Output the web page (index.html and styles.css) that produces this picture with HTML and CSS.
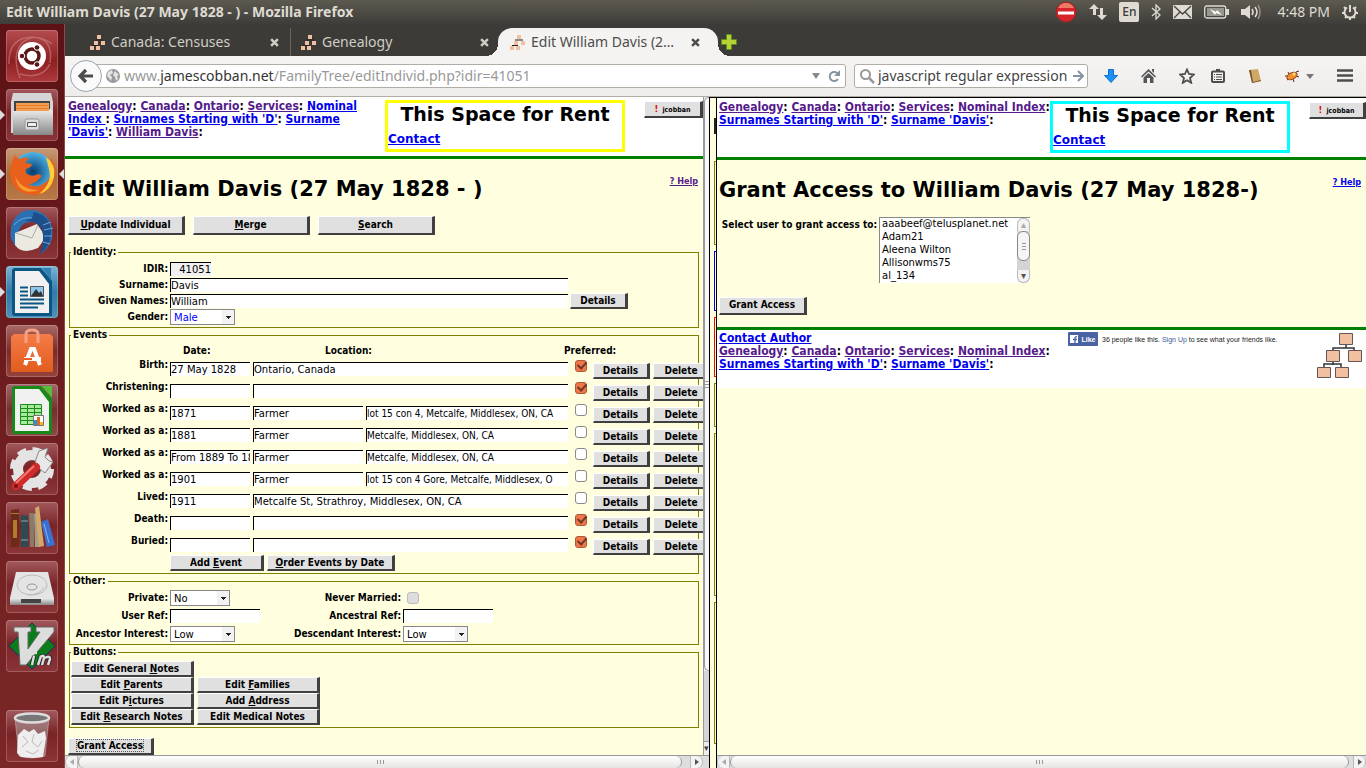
FILE: index.html
```
<!DOCTYPE html>
<html lang="en">
<head>
<meta charset="utf-8">
<title>Edit William Davis (27 May 1828 - )</title>
<link rel="stylesheet" href="styles.css">
</head>
<body>
<svg class="defs" aria-hidden="true">
  <defs>
    <symbol id="favicon" viewBox="0 0 15 15"><path fill="#f0c0a0" d="M7 0h4v4H7zM4 6h4v4H4zM11 6h4v4h-4zM0 11h4v4H0zM6 11h4v4H6z"/><path d="M5 5h8M2 10.500h6" stroke="#222" fill="none"/></symbol>
    <symbol id="cross" viewBox="0 0 8 8"><path d="M1 1l6 6M7 1L1 7" stroke="currentColor" stroke-width="2.200" fill="none"/></symbol>
    <symbol id="pedigree" viewBox="0 0 48 48"><path d="M30 12v4M17 21v-5h21v5M17 29v4M8 37v-5h17v5" fill="none" stroke="#333" stroke-width="1.500"/><g fill="#f0c0a0" stroke="#665550"><path d="M23.500 1.500h13v11h-13zM10.500 18.500h13v11h-13zM32.500 18.500h13v11h-13zM1.500 35.500h13v10h-13zM19.500 35.500h13v10h-13z"/></g></symbol>
    <linearGradient id="steel" x2="0" y2="1"><stop stop-color="#eee"/><stop offset="1" stop-color="#888"/></linearGradient>
    <linearGradient id="orange" x2="0" y2="1"><stop stop-color="#f47c48"/><stop offset="1" stop-color="#e25c1e"/></linearGradient>
    <radialGradient id="globe"><stop stop-color="#053a70"/><stop offset="1" stop-color="#4fb4e4"/></radialGradient>
  </defs>
</svg>

<header class="panel">
  <span class="panel-title">Edit William Davis (27 May 1828 - ) - Mozilla Firefox</span>
  <div class="tray">
    <svg width="22" height="22" viewBox="0 0 22 22"><circle cx="11" cy="11" r="10" fill="#d8232a" stroke="#8e2a25"/><path d="M3 7a9 9 0 0 1 16 0z" fill="#ee7966"/><path fill="#fff" d="M3 10.500h16v3H3z"/></svg>
    <svg width="18" height="18" viewBox="0 0 18 18" fill="#dfdbd2"><path d="M5 1l5 5H7v6H4V6H0zM13 17l-5-5h3V5h3v7h4z"/></svg>
    <span class="lang">En</span>
    <svg width="10" height="16" viewBox="0 0 10 16" fill="none" stroke="#dfdbd2" stroke-width="1.300"><path d="M1 4l8 7-4 4V1l4 4-8 7"/></svg>
    <svg width="19" height="14" viewBox="0 0 19 14"><path fill="#dfdbd2" d="M0 0h19v14H0z"/><path d="M1 1l8.500 8L18 1M1 13l6-6M18 13l-6-6" fill="none" stroke="#444" stroke-width="1.300"/></svg>
    <svg width="25" height="14" viewBox="0 0 25 14"><rect x=".7" y="1" width="21" height="12" rx="2" fill="none" stroke="#dfdbd2" stroke-width="1.300"/><path fill="#dfdbd2" d="M22 4h3v6h-3z"/><path fill="#99968f" d="M3 3h17v8H3z"/><path fill="#fff" d="M6 4l6 3 1-2 5 5-6-2-1 2z"/></svg>
    <svg width="20" height="16" viewBox="0 0 20 16"><path fill="#dfdbd2" d="M0 5h4l5-4v14l-5-4H0z"/><path fill="none" stroke="#dfdbd2" stroke-width="1.600" d="M11 5q2 3 0 6M14 3q4 5 0 10"/><path fill="none" stroke="#918d86" stroke-width="1.600" d="M17 1q4 7 0 14"/></svg>
    <time class="clock">4:48 PM</time>
    <svg width="16" height="16" viewBox="0 0 16 16" fill="none" stroke="#dfdbd2"><path stroke-width="2" d="M5 3.500a5.500 5.500 0 1 0 6 0M8 1v7"/><path stroke-width="2" d="M0 9h3M13 9h3M8 13v3M2 3l2 2M14 3l-2 2M3 14l2-2M13 14l-2-2"/></svg>
  </div>
</header>

<div class="desktop">
<nav class="launcher" aria-label="Launcher">
  <button class="tile t-dash" aria-label="Dash"><svg viewBox="0 0 52 52"><path d="M3 34Q2 8 26 7q22 1 18 26M46 14Q30 2 17 12 5 24 14 48M14 44q22 6 30-10" fill="none" stroke="#d69090" stroke-opacity=".5" stroke-width="1.500"/><circle cx="26" cy="26" r="14" fill="#fff"/><circle cx="26" cy="26" r="7" fill="none" stroke="#5a1717" stroke-width="3.500"/><g fill="#5a1717" stroke="#fff"><circle cx="16" cy="26" r="2.800"/><circle cx="31" cy="17.500" r="2.800"/><circle cx="31" cy="34.500" r="2.800"/></g></svg></button>
  <button class="tile t-files running" aria-label="Files"><svg viewBox="0 0 52 52"><path fill="#d5d5d5" d="M7 4h38l2 9v31H5V13z"/><path fill="#444" d="M8 12h36v10H8z"/><path fill="#f0a050" d="M10 14h33v8H10z"/><path fill="#e87a2c" d="M10 16h32v1H10zM10 19h32v1H10z"/><path fill="url(#steel)" d="M7 22l36 0 0-2 4 2v24H7z"/><rect x="19" y="30" width="14" height="11" rx="2" fill="#ddd" stroke="#999"/><path d="M21.500 33.500h9v4h-9z" fill="#eee" stroke="#555"/></svg></button>
  <button class="tile t-fox running focused" aria-label="Firefox"><svg viewBox="0 0 52 52"><circle cx="27" cy="24" r="20" fill="url(#globe)"/><path fill="#e8601c" d="M4 25C4 15 8 11 9 7q2 4 5 4 5-3 9 0-3 1-4 4l7 1q0 3-6 5-2 4 3 6 5 2 9-1 5 1 2 4-5 6-12 6 10 6 19-3 8-9 3-24 6 6 5 18-3 20-22 20Q6 46 4 25z"/><path fill="#ffcf3a" d="M40 9q10 7 8 20-3 14-15 17 14-11 10-25z"/><path fill="#f89c2f" d="M9 28q6 14 24 14-20 7-24-14z"/></svg></button>
  <button class="tile t-bird" aria-label="Thunderbird"><svg viewBox="0 0 52 52"><path fill="#2c70b4" d="M5 32Q2 12 18 4q16-4 25 9 10 20-8 34 3-7 2-14Q39 13 24 15 11 15 10 40z"/><path fill="#eceae0" d="M9 26l22-9 9 13-8 11q-16 7-23-3z"/><path d="M10 26l16 5 6-13" fill="none" stroke="#aaa"/><path fill="#1e4f8b" d="M27 5q18 3 18 21-1 14-11 21 3-8 3-15 1-18-18-18 10-3 8-9z"/><path d="M37 18l8-3M38 23l9-2M38 29l8 0M37 35l7 2M8 18q8-9 18-7" stroke="#69a7dd" fill="none"/></svg></button>
  <button class="tile t-writer running" aria-label="Writer"><svg viewBox="0 0 52 52"><path fill="#0d5583" d="M9 2h26l11 13v35H9q-3 0-3-3V5q0-3 3-3z"/><path fill="#2f82b2" d="M36 2h9v12z"/><path fill="#f1f1f1" d="M9 5h24l10 13v29H9z"/><path d="M14 21.500h8M14 25.500h8M14 29.500h8M14 33.500h24M14 37.500h24M14 41.500h18" stroke="#0d5583" stroke-width="2"/><path fill="#8bc8ee" stroke="#555" d="M24.500 20.500h13v10h-13z"/><path fill="#333" d="M25 30l5-7 3 4 2-2 2 5z"/></svg></button>
  <button class="tile t-soft" aria-label="Software Center"><svg viewBox="0 0 52 52"><path fill="url(#orange)" d="M5 12l3-3h36l3 3v35H5z"/><path d="M20 18V9q0-4 6-4t6 4v9" fill="none" stroke="#f5a184" stroke-width="3"/><path d="M19 40l6-16h3l6 16" fill="none" stroke="#fff" stroke-width="4"/><path d="M18 34h17" stroke="#fff" stroke-width="4"/><path d="M18 34h8" stroke="#e95d20" stroke-width="2"/></svg></button>
  <button class="tile t-calc" aria-label="Calc"><svg viewBox="0 0 52 52"><path fill="#188a18" d="M9 2h26l11 13v35H9q-3 0-3-3V5q0-3 3-3z"/><path fill="#55bd38" d="M36 2h10v12z"/><path fill="#f1f1f1" d="M9 5h24l10 13v29H9z"/><path fill="#a8e89a" stroke="#188a18" d="M14.500 20.500h21v20h-21z"/><path stroke="#188a18" d="M14 24.500h22M14 28.500h22M14 32.500h22M14 36.500h22M21.500 20v21M28.500 20v21"/><path fill="#fff" stroke="#777" d="M27.500 31.500h10v10h-10z"/><path fill="#2a8fd8" d="M28 36h3v5h-3z"/><path fill="#e5671f" d="M31 33h3v8h-3z"/><path fill="#f5b921" d="M34 38h3v3h-3z"/></svg></button>
  <button class="tile" aria-label="Settings"><svg viewBox="0 0 52 52"><circle cx="26" cy="26" r="14" fill="none" stroke="#e4e4e4" stroke-width="10"/><circle cx="26" cy="26" r="19.500" fill="none" stroke="#e4e4e4" stroke-width="5" stroke-dasharray="9 6.300"/><path d="M29 22l10 8 8-11-4-1-4-4 3-9-9 3-3 8z" fill="#e8e8e8" stroke="#888"/><path d="M10 43L30 24" stroke="#cf2b2b" stroke-width="8" stroke-linecap="round"/><path d="M10 40L28 23" stroke="#f07a70" stroke-width="2"/><circle cx="10" cy="43" r="2" fill="#7c1212"/></svg></button>
  <button class="tile" aria-label="Library"><svg viewBox="0 0 52 52"><path fill="#6b2a1a" d="M5 8l8-1v38H5z"/><path fill="#b27a2e" d="M7 18h4v18H7zM5 11h8v1H5z"/><path fill="#2f4a50" d="M15 13l7 1v31h-7z"/><path stroke="#8aa" d="M15 19h7M15 38h7"/><path fill="#8a7a6a" d="M23 11h5v34h-4z"/><path fill="#aa9b85" d="M28 12l3-1 3 34h-5z"/><path fill="#d0aa68" d="M29 6l4-2 5 40-5 1z"/><path fill="#3a70d0" d="M35 20l7-3 7 26-8 2z"/><path d="M38 22l5 19" stroke="#8ab4f4"/></svg></button>
  <button class="tile" aria-label="Disk"><svg viewBox="0 0 52 52"><path fill="#e4e4e4" d="M10 11h32l6 26H4z"/><path fill="url(#steel)" d="M4 37h44v7H4z"/><path fill="#444" d="M15 38h20v4H15z"/><ellipse cx="26" cy="24" rx="15" ry="10" fill="none" stroke="#bbb"/><ellipse cx="26" cy="26" rx="5" ry="3" fill="none" stroke="#999"/><path d="M22 34q12 0 16-8" fill="none" stroke="#bbb"/></svg></button>
  <button class="tile" aria-label="Vim"><svg viewBox="0 0 52 52"><path fill="#0b7d18" stroke="#0b3070" d="M26 3l23 23-23 23L3 26z"/><path fill="#ddd" stroke="#666" d="M8 7h17v5h-3v17L34 12h-4V7h18v5L20 45h-6l-2-33H8z"/><g fill="none" stroke="#222" stroke-width="4"><path d="M28 36l-2 9M32 45l3-9M34 37q4-3 4 1l-2 7M39 38q5-3 5 1l-2 6"/></g><g fill="none" stroke="#ddd" stroke-width="2.500"><path d="M28 36l-2 9M32 45l3-9M34 37q4-3 4 1l-2 7M39 38q5-3 5 1l-2 6"/></g><path fill="#ddd" d="M28 31h3v3h-3z"/></svg></button>
  <button class="tile trash" aria-label="Trash"><svg viewBox="0 0 52 52"><path fill="#bbb" fill-opacity=".45" stroke="#ddd" stroke-opacity=".4" d="M9 8h34l-4 38q-13 4-26 0z"/><path fill="#eee" d="M12 25l6-6 5 3 5-3 4 5 7-3 1 7-3 19-10 1-12-1-4-4z"/><path d="M17 26l5 6-6 5M28 24l-2 8 6 5 4-6M20 41l7 3 6-4" fill="none" stroke="#bbb"/><ellipse cx="26" cy="8" rx="17" ry="4.500" fill="#777" stroke="#ddd" stroke-width="2.500"/></svg></button>
</nav>

<div class="browser">
  <div class="tabs">
    <div class="tab"><svg class="fav"><use href="#favicon"/></svg><span>Canada: Censuses</span><button class="x" aria-label="Close tab"><svg><use href="#cross"/></svg></button></div>
    <div class="tab sep"><svg class="fav"><use href="#favicon"/></svg><span>Genealogy</span><button class="x" aria-label="Close tab"><svg><use href="#cross"/></svg></button></div>
    <div class="tab active"><svg class="fav"><use href="#favicon"/></svg><span>Edit William Davis (2…</span><button class="x" aria-label="Close tab"><svg><use href="#cross"/></svg></button></div>
    <button class="newtab" aria-label="New tab"><svg width="16" height="16" viewBox="0 0 16 16"><path d="M5.500.5h5v5h5v5h-5v5h-5v-5h-5v-5h5z" fill="#b5d334" stroke="#5f8a1e"/></svg></button>
  </div>
  <div class="toolbar">
    <button class="back" aria-label="Back"><svg width="16" height="16" viewBox="0 0 16 16"><path d="M8 2L2 8l6 6M2 8h13" fill="none" stroke="#4c4c4c" stroke-width="3.200"/></svg></button>
    <div class="urlbar">
      <svg width="14" height="14" viewBox="0 0 14 14"><circle cx="7" cy="7" r="7" fill="#999"/><path fill="#e4e4e4" d="M2 3l4-2 1 3-3 2 2 2-1 4-2-3-2-2zM9 2l4 4-2 1 1 3-2 2-1-4-2-2z"/></svg>
      <span class="url">www.<b>jamescobban.net</b>/FamilyTree/editIndivid.php?idir=41051</span>
      <svg width="8" height="6" viewBox="0 0 8 6"><path fill="#888" d="M0 0h8L4 6z"/></svg>
      <svg width="13" height="13" viewBox="0 0 13 13"><path d="M10 9a4.500 4.500 0 1 1 0-5" fill="none" stroke="#8695a3" stroke-width="2"/><path fill="#8695a3" d="M12 0v6H6z"/></svg>
    </div>
    <div class="search">
      <svg width="15" height="15" viewBox="0 0 15 15" fill="none" stroke="#999" stroke-width="2"><circle cx="5.500" cy="5.500" r="4.500"/><path stroke-width="2.500" d="M9 9l5 5"/></svg>
      <input aria-label="Search" value="javascript regular expression">
      <svg width="11" height="12" viewBox="0 0 11 12"><path d="M0 6h9M5 1l5 5-5 5" fill="none" stroke="#8494a2" stroke-width="2"/></svg>
    </div>
    <div class="tools">
      <svg width="14" height="14" viewBox="0 0 14 14"><path fill="#1d90f5" stroke="#0b6fd0" d="M4.500.5h5v6h4L7 13.500.5 6.500h4z"/></svg>
      <svg width="15" height="14" viewBox="0 0 15 14" fill="#555"><path d="M0 7.500L7.500 0 15 7.500l-1 1L7.500 2.500 1 8.500zM11 0h2v4l-2-2zM2.500 8.500l5-4.500 5 4.500V14H9V9H6v5H2.500z"/></svg>
      <svg width="16" height="16" viewBox="0 0 16 16"><path d="M8 1.500l2 4.500 5 .5-4 3.500 1.200 4.800L8 12.300l-4.200 2.500L5 10 1 6.500 6 6z" fill="none" stroke="#4d4d4d" stroke-width="1.800"/></svg>
      <svg width="14" height="14" viewBox="0 0 14 14" fill="none" stroke="#4d4d4d"><rect x="1" y="2.500" width="12" height="10.500" rx="1" stroke-width="2"/><path stroke-width="2" d="M5 1h4"/><path d="M3 5.500h1M5 5.500h6M3 8h1M5 8h6M3 10.500h1M5 10.500h6"/></svg>
      <svg width="14" height="14" viewBox="0 0 14 14"><path fill="#d0a866" d="M1 1l9-1 3 12-9 2z"/><path fill="#75502e" d="M1 1l2 0 2 12-1 1zM5 13l8-2v1l-9 2z"/></svg>
      <svg width="16" height="13" viewBox="0 0 16 13"><path d="M1 6l3 0M3 10l3-2M9 9l1 3M12 2l3-1M12 6l3 1M5 4L4 2" stroke="#5a2a12"/><ellipse cx="8" cy="6" rx="5.500" ry="3.200" transform="rotate(-28 8 6)" fill="#f0912c" stroke="#8c3d12"/><circle cx="10" cy="4" r="1.500" fill="#ffd580"/></svg>
      <svg width="8" height="5" viewBox="0 0 8 5"><path fill="#777" d="M0 0h8L4 5z"/></svg>
      <svg width="16" height="14" viewBox="0 0 16 14"><path d="M0 1.500h16M0 6.500h16M0 11.500h16" stroke="#4d4d4d" stroke-width="2.600"/></svg>
    </div>
  </div>

  <div class="frames">
    <section class="frame main">
      <div class="page">
        <div class="mast">
          <div class="crumbs"><a class="v" href="#">Genealogy</a>: <a class="v" href="#">Canada</a>: <a class="v" href="#">Ontario</a>: <a class="v" href="#">Services</a>: <a href="#">Nominal Index </a>: <a href="#">Surnames Starting with 'D'</a>: <a href="#">Surname 'Davis'</a>: <a class="v" href="#">William Davis</a>:</div>
          <div class="rent"><h2>This Space for Rent</h2><a href="#">Contact</a></div>
          <button class="btn user"><i>!</i> jcobban</button>
        </div>
        <div class="body">
          <div class="head"><h1>Edit William Davis (27 May 1828 - )</h1><a class="v help" href="#">? Help</a></div>
          <div class="actions"><button class="btn"><u>U</u>pdate Individual</button><button class="btn"><u>M</u>erge</button><button class="btn"><u>S</u>earch</button></div>

          <fieldset><legend>Identity:</legend>
            <div class="identity">
              <label for="idir">IDIR:</label><input id="idir" class="id" value="41051" readonly>
              <label for="sur">Surname:</label><input id="sur" value="Davis">
              <label for="giv">Given Names:</label><input id="giv" value="William"><button class="btn">Details</button>
              <label for="gen">Gender:</label><span class="sel gender"><select id="gen"><option>Male</option></select></span>
            </div>
          </fieldset>

          <fieldset><legend>Events</legend>
            <div class="ev-head"><span>Date:</span><span>Location:</span><span>Preferred:</span></div>
            <div class="ev"><label for="d1">Birth:</label><input id="d1" value="27 May 1828"><input class="wide" aria-label="Location" value="Ontario, Canada"><input type="checkbox" aria-label="Preferred" checked><button class="btn">Details</button><button class="btn">Delete</button></div>
            <div class="ev"><label for="d2">Christening:</label><input id="d2"><input class="wide" aria-label="Location"><input type="checkbox" aria-label="Preferred" checked><button class="btn">Details</button><button class="btn">Delete</button></div>
            <div class="ev"><label for="d3">Worked as a:</label><input id="d3" value="1871"><input aria-label="Occupation" value="Farmer"><input class="place" aria-label="Location" value="lot 15 con 4, Metcalfe, Middlesex, ON, CA"><input type="checkbox" aria-label="Preferred"><button class="btn">Details</button><button class="btn">Delete</button></div>
            <div class="ev"><label for="d4">Worked as a:</label><input id="d4" value="1881"><input aria-label="Occupation" value="Farmer"><input class="place" aria-label="Location" value="Metcalfe, Middlesex, ON, CA"><input type="checkbox" aria-label="Preferred"><button class="btn">Details</button><button class="btn">Delete</button></div>
            <div class="ev"><label for="d5">Worked as a:</label><input id="d5" value="From 1889 To 18"><input aria-label="Occupation" value="Farmer"><input class="place" aria-label="Location" value="Metcalfe, Middlesex, ON, CA"><input type="checkbox" aria-label="Preferred"><button class="btn">Details</button><button class="btn">Delete</button></div>
            <div class="ev"><label for="d6">Worked as a:</label><input id="d6" value="1901"><input aria-label="Occupation" value="Farmer"><input class="place" aria-label="Location" value="lot 15 con 4 Gore, Metcalfe, Middlesex, O"><input type="checkbox" aria-label="Preferred"><button class="btn">Details</button><button class="btn">Delete</button></div>
            <div class="ev"><label for="d7">Lived:</label><input id="d7" value="1911"><input class="wide" aria-label="Location" value="Metcalfe St, Strathroy, Middlesex, ON, CA"><input type="checkbox" aria-label="Preferred"><button class="btn">Details</button><button class="btn">Delete</button></div>
            <div class="ev"><label for="d8">Death:</label><input id="d8"><input class="wide" aria-label="Location"><input type="checkbox" aria-label="Preferred" checked><button class="btn">Details</button><button class="btn">Delete</button></div>
            <div class="ev"><label for="d9">Buried:</label><input id="d9"><input class="wide" aria-label="Location"><input type="checkbox" aria-label="Preferred" checked><button class="btn">Details</button><button class="btn">Delete</button></div>
            <div class="ev-foot"><button class="btn">Add <u>E</u>vent</button><button class="btn"><u>O</u>rder Events by Date</button></div>
          </fieldset>

          <fieldset><legend>Other:</legend>
            <div class="other">
              <label for="prv">Private:</label><span class="sel private"><select id="prv"><option>No</option></select></span>
              <label for="nm">Never Married:</label><input id="nm" type="checkbox" disabled>
              <label for="ur">User Ref:</label><input id="ur">
              <label for="ar">Ancestral Ref:</label><input id="ar">
              <label for="ai">Ancestor Interest:</label><span class="sel"><select id="ai"><option>Low</option></select></span>
              <label for="di">Descendant Interest:</label><span class="sel"><select id="di"><option>Low</option></select></span>
            </div>
          </fieldset>

          <fieldset><legend>Buttons:</legend>
            <div class="links">
              <button class="btn solo">Edit General <u>N</u>otes</button>
              <button class="btn">Edit <u>P</u>arents</button><button class="btn">Edit <u>F</u>amilies</button>
              <button class="btn">Edit P<u>i</u>ctures</button><button class="btn">Add <u>A</u>ddress</button>
              <button class="btn">Edit <u>R</u>esearch Notes</button><button class="btn">Edit Medical Notes</button>
            </div>
          </fieldset>
          <button class="btn grant"><span class="ring">Grant Access</span></button>
        </div>
      </div>
      <div class="vbar"><div class="vthumb"><i class="grip"></i></div><div class="vtrack"></div><div class="vend">▾</div></div>
      <div class="hbar"><span class="arrow"><i class="l"></i></span><span class="hthumb"><i class="grip"></i></span><span class="arrow end"><i class="r"></i></span></div>
    </section>

    <div class="behind" aria-hidden="true"><i class="dark"></i><i class="b1"></i><i class="b2"></i><i class="b3"></i><i class="b4"></i><i class="b5"></i><i class="b6"></i></div>

    <section class="frame side">
      <div class="page">
        <div class="mast">
          <div class="crumbs"><a class="v" href="#">Genealogy</a>: <a class="v" href="#">Canada</a>: <a class="v" href="#">Ontario</a>: <a class="v" href="#">Services</a>: <a class="v" href="#">Nominal Index</a>: <a href="#">Surnames Starting with 'D'</a>: <a href="#">Surname 'Davis'</a>:</div>
          <div class="rent cyan"><h2>This Space for Rent</h2><a href="#">Contact</a></div>
          <button class="btn user"><i>!</i> jcobban</button>
        </div>
        <div class="body">
          <div class="head"><h1>Grant Access to William Davis (27 May 1828-)</h1><a class="help" href="#">? Help</a></div>
          <div class="pick">
            <label for="users">Select user to grant access to:</label>
            <div class="list"><select id="users" size="5"><option>aaabeef@telusplanet.net</option><option>Adam21</option><option>Aleena Wilton</option><option>Allisonwms75</option><option>al_134</option></select>
            <div class="lbar"><span>▴</span><b><i class="grip"></i></b><span class="dn">▾</span></div></div>
          </div>
          <button class="btn big">Grant Access</button>
        </div>
        <footer class="foot">
          <div class="foot-links"><a href="#">Contact Author</a><div class="crumbs"><a class="v" href="#">Genealogy</a>: <a class="v" href="#">Canada</a>: <a class="v" href="#">Ontario</a>: <a class="v" href="#">Services</a>: <a class="v" href="#">Nominal Index</a>: <a href="#">Surnames Starting with 'D'</a>: <a href="#">Surname 'Davis'</a>:</div></div>
          <div class="fb"><button class="like"><svg width="8" height="8" viewBox="0 0 8 8"><path fill="#fff" d="M0 0h8v8H0z"/><path d="M5 8V3q0-1.500 2-1.300M3 4.500h4" fill="none" stroke="#4862a3" stroke-width="1.300"/></svg>Like</button><span>36 people like this. <a href="#">Sign Up</a> to see what your friends like.</span></div>
          <svg class="tree" width="48" height="48"><use href="#pedigree"/></svg>
        </footer>
      </div>
      <div class="hbar"><span class="arrow"><i class="l"></i></span><span class="hthumb"><i class="grip"></i></span><span class="arrow end"><i class="r"></i></span></div>
    </section>
  </div>
</div>
</div>
</body>
</html>
```

FILE: styles.css
```
* { box-sizing: border-box; }
body { margin: 0; height: 100vh; display: flex; flex-direction: column; overflow: hidden; background: #3c3b37; font: 15px/18px "Noto Sans", sans-serif; }
svg { display: block; flex: none; }
button { font: inherit; margin: 0; padding: 0; border: 0; background: none; }
input, select { margin: 0; font: inherit; }
.defs { position: absolute; width: 0; height: 0; }

/* top panel */
.panel { flex: none; height: 24px; display: flex; align-items: center; justify-content: space-between; padding: 0 8px 0 6px; background: linear-gradient(#5c5a50, #3e3d39); color: #dfdbd2; }
.panel-title { font-weight: 700; font-size: 14px; }
.tray { display: flex; align-items: center; gap: 12px; }
.lang { width: 20px; height: 20px; border-radius: 2px; background: #dfdbd2; color: #3c3b37; text-align: center; font: 500 12px/20px "Noto Sans", sans-serif; }
.clock { margin-left: 4px; font-size: 14px; }

.desktop { flex: 1; min-height: 0; display: flex; }

/* launcher */
.launcher { flex: none; width: 65px; display: flex; flex-direction: column; gap: 7px; padding: 6px 7px 6px 6px; background: linear-gradient(90deg, transparent 64px, #8d4a4b 64px), linear-gradient(#5c1215, #6f1d1f 50%, #7b2728); }
.tile { position: relative; flex: none; width: 52px; height: 52px; border-radius: 4px; background: linear-gradient(#a2595c, #7a2427 45%, #8c3538); box-shadow: inset 0 0 0 1px rgba(255, 255, 255, .2); }
.tile svg { width: 52px; height: 52px; }
.t-dash { background: linear-gradient(#b34c4e, #8d1f22 60%, #ad3b3c); }
.t-fox { background: linear-gradient(#c89a78, #ad6a38 50%, #b87848); }
.t-writer { background: linear-gradient(#7db4d2, #2f7ba8 50%, #4f90b8); }
.t-soft { background: linear-gradient(#a86a66, #7c2c2a 50%, #93443a); }
.t-calc { background: linear-gradient(#a1676a, #74302f 50%, #8c4a46); }
.running::before, .focused::after { content: ""; position: absolute; top: 21px; border: 5px solid transparent; }
.running::before { left: -6px; border-left-color: #ddd; border-right-width: 0; }
.focused::after { right: -6px; border-right-color: #ddd; border-left-width: 0; }
.trash { margin-top: auto; }

/* tabs and toolbar */
.browser { flex: 1; min-width: 0; display: flex; flex-direction: column; }
.tabs { flex: none; height: 32px; display: flex; align-items: flex-end; padding-left: 15px; background: #3c3b37; color: #d0cdc5; font-size: 14px; }
.tab { width: 210px; height: 28px; display: flex; align-items: center; gap: 6px; padding: 0 11px 0 10px; white-space: nowrap; }
.sep { border-left: 1px solid #66645d; }
.tab .fav { width: 15px; height: 15px; }
.tab .x { margin-left: auto; color: inherit; }
.tab .x svg { width: 9px; height: 9px; }
.active { position: relative; width: 220px; padding: 0 18px 0 12px; margin-left: -2px; border-radius: 14px 14px 0 0; background: #f4f3f2; color: #4c4c4c; }
.active::before, .active::after { content: ""; position: absolute; bottom: 0; width: 12px; height: 12px; }
.active::before { left: -12px; background: radial-gradient(circle at 0 0, transparent 12px, #f4f3f2 12px); }
.active::after { right: -12px; background: radial-gradient(circle at 100% 0, transparent 12px, #f4f3f2 12px); }
.newtab { margin: 0 0 6px 3px; position: relative; }
.toolbar { flex: none; height: 41px; display: flex; align-items: center; padding: 0 13px 0 5px; border-bottom: 1px solid #b0aca6; background: linear-gradient(#f5f4f3, #eeedeb); }
.back { position: relative; flex: none; width: 32px; height: 32px; display: grid; place-items: center; border: 1px solid #98a5b2; border-radius: 50%; background: #fafafa; }
.urlbar, .search { height: 24px; display: flex; align-items: center; border: 1px solid #b0aca6; border-radius: 3px; background: #fff; color: #444; font-size: 14px; }
.urlbar { flex: 1; gap: 8px; padding: 0 4px 0 13px; margin-left: -10px; }
.url { flex: 1; margin-left: -4px; color: #999; white-space: nowrap; overflow: hidden; }
.url b { color: #333; font-weight: 400; }
.search { width: 234px; margin-left: 8px; padding: 0 3px 0 5px; }
.search input { flex: 1; min-width: 0; padding: 0 0 0 3px; border: 0; background: none; color: #444; }
.tools { display: flex; align-items: center; gap: 23px; margin-left: 16px; }
.tools svg:nth-child(4) { margin-left: -7px; }
.tools svg:nth-child(6) { margin-left: -1px; }
.tools svg:nth-child(7) { margin-left: -17px; }

/* frames */
.frames { flex: 1; min-height: 0; display: flex; font-family: "DejaVu Sans", sans-serif; color: #000; }
.frame { min-width: 0; display: grid; grid-template-rows: minmax(0, 1fr) 13px; background: #ffffe0; }
.main { flex: 644; grid-template-columns: minmax(0, 1fr) 6px; }
.side { flex: 649; grid-template-columns: minmax(0, 1fr); border-top: 1px solid #000; }
.page { overflow: hidden; }
.frame a { color: #00e; }
.frame a.v { color: #551a8b; }
.mast { height: 62px; display: flex; align-items: flex-start; padding: 3px 0 0 3px; border-bottom: 3px solid #008000; background: #fff; }
.side .mast { padding-left: 2px; }
.crumbs { flex: 1; font: bold 12px/13px "DejaVu Sans Condensed", "DejaVu Sans", sans-serif; }
.main .crumbs { padding-right: 20px; }
.side .crumbs { margin-right: -2px; }
.rent { flex: none; width: 240px; height: 52px; padding: 0; border: 3px solid #ff0; font-weight: bold; font-size: 12px; line-height: 15px; }
.cyan { border-color: #0ff; }
.side .rent { margin-left: 2px; }
.rent h2 { margin: 0 0 7px; text-align: center; font-size: 19px; line-height: 22px; }
.btn { height: 16px; padding: 0; border: solid; border-width: 1px 3px 2px 1px; border-color: #fff #404040 #404040 #fff; background: #e0e0e0; color: #000; font: bold 10px/12px "DejaVu Sans Condensed", "DejaVu Sans", sans-serif; white-space: nowrap; overflow: hidden; }
.user { flex: none; width: 59px; height: 17px; margin: 1px 0 0 19px; font-size: 7px; }
.user i { margin-right: 2px; color: #e00000; font-size: 9px; font-style: normal; }
.side .user { width: 57px; }
.body { padding: 17px 4px 0; }
.side .body { height: 170px; border-bottom: 3px solid #008000; padding: 17px 4px 0 3px; }
.head { display: flex; justify-content: space-between; margin-left: -1px; }
h1 { margin: 0; font-size: 21px; line-height: 26px; white-space: nowrap; }
.help { margin: -1px 1px 0; font: bold 9px/12px "DejaVu Sans Condensed", sans-serif; }
.actions { display: grid; grid-template-columns: repeat(3, 117px); gap: 8px; margin: 14px 0 11px -1px; }
.actions .btn { height: 19px; }
fieldset { min-width: 0; margin: 0 0 1px; padding: 3px 1px 2px; border: 1px solid #808000; }
legend { margin: 0; padding: 0 2px; font: bold 10px/12px "DejaVu Sans Condensed", sans-serif; }
fieldset label, .ev-head, .pick label { font: bold 10px/12px "DejaVu Sans Condensed", sans-serif; text-align: right; white-space: nowrap; }
fieldset input, .sel, .list { font: 10px/13px "DejaVu Sans", sans-serif; }
fieldset input:not([type=checkbox]) { width: 100%; min-width: 0; height: 14px; padding: 0; border: solid #000; border-width: 1px 0 0 1px; background: #fff; }
.identity { display: grid; grid-template-columns: 97px 398px 58px; grid-auto-rows: 16px; gap: 0 2px; align-items: center; }
.identity label { grid-column: 1; }
fieldset input.id:not([type=checkbox]) { width: 41px; background: #f0f0f0; text-align: right; }
.sel { position: relative; display: block; width: 65px; height: 16px; }
.sel select { width: 100%; height: 100%; padding: 0 0 0 3px; appearance: none; border: 1px solid #888; border-radius: 0; background: #fff; color: #000; }
.sel::after { content: ""; position: absolute; right: 1px; top: 1px; width: 12px; height: 14px; background: linear-gradient(#222, #222) 4px 6px / 5px 1px no-repeat, linear-gradient(#222, #222) 5px 7px / 3px 1px no-repeat, linear-gradient(#222, #222) 6px 8px / 1px 1px no-repeat, #f2f2f2; }
.gender select { color: #00f; }
.private { width: 60px; }
.ev-head { display: grid; grid-template-columns: 142px 239px 60px; padding: 1px 0 0 112px; height: 13px; text-align: left; }
.ev { display: grid; grid-template-columns: 96px 80px 110px 202px 19px 57px 58px; gap: 0 3px; height: 22px; align-items: start; }
.ev label { padding-top: 2px; margin-right: -1px; }
.ev input:not([type=checkbox]) { margin-top: 5px; }
.ev input.place:not([type=checkbox]) { font-family: "DejaVu Sans Condensed", sans-serif; }
.ev .wide { grid-column: 3 / 5; }
.ev .btn { margin-top: 6px; }
input[type=checkbox] { position: relative; width: 12px; height: 12px; margin: 0 0 0 4px; appearance: none; border: 1px solid #8a8a8a; border-radius: 3px; background: #fff; }
.ev input[type=checkbox] { margin-top: 3px; }
input[type=checkbox]:checked { border-color: #a85a38; background: #f0764a; }
input[type=checkbox]:checked::after { content: ""; position: absolute; left: 3px; top: -1px; width: 4px; height: 7px; border: solid #6b3a28; border-width: 0 2px 2px 0; transform: rotate(42deg); }
input[type=checkbox]:disabled { border-color: #bbb; background: #ddd; }
.ev-foot { display: grid; grid-template-columns: 94px 128px; gap: 3px; padding-left: 99px; }
.other { display: grid; grid-template-columns: 97px 90px 139px 90px; gap: 2px; grid-auto-rows: 16px; align-items: center; }
.links { display: grid; grid-template-columns: 123px 123px; column-gap: 3px; }
.links .solo { grid-column: 1 / 3; width: 123px; }
.grant { width: 86px; height: 17px; margin: 9px 0 0 -1px; }
.ring { outline: 1px dotted #555; }

/* scroll bars */
.vbar { display: flex; flex-direction: column; border-left: 1px solid #999; background: #eee; overflow: hidden; }
.vthumb { flex: 574; border: 1px solid #999; border-width: 1px 0 1px 1px; border-radius: 6px 0 0 6px; background: #f8f8f8; display: flex; align-items: center; }
.vtrack { flex: 70; background: #d4d4d4; border-bottom: 1px solid #999; }
.vend { height: 13px; color: #444; font-size: 9px; line-height: 12px; }
.grip { display: block; width: 7px; height: 4px; margin: auto; background: repeating-linear-gradient(90deg, #999 0 1px, transparent 1px 3px); }
.vthumb .grip, .lbar .grip { width: 4px; height: 7px; background: repeating-linear-gradient(#999 0 1px, transparent 1px 3px); }
.hbar { grid-column: 1 / -1; display: flex; border-top: 1px solid #999; background: #ddd; }
.arrow { width: 13px; display: grid; place-items: center; background: #f3f3f3; border: 1px solid #bbb; border-width: 0 1px; border-radius: 6px 0 0 6px; }
.arrow.end { border-radius: 0 6px 6px 0; margin-left: 8px; }
.side .hbar .end { margin-left: 4px; }
.main .hbar .end { margin-right: 6px; }
.arrow i { border: 3px solid transparent; }
.arrow .l { border-right: 4px solid #aaa; border-left: 0; }
.arrow .r { border-left: 4px solid #555; border-right: 0; }
.hthumb { flex: 1; display: flex; align-items: center; border: 1px solid #999; border-width: 0 1px; border-radius: 7px; background: linear-gradient(#fff, #e6e4e2); }

/* sliver of the page behind the dialog */
.behind { flex: none; width: 8px; display: flex; flex-direction: column; gap: 6px; padding: 20px 0 0 4px; border: solid #000; border-width: 1px 1px 0; background: #ffffe0; overflow: hidden; }
.behind i { flex: none; width: 3px; border: 1px solid #808000; border-right: 0; }
.behind .dark { height: 16px; margin-bottom: 21px; background: #222; border-color: #222; }
.b1 { height: 84px; } .b2 { height: 60px; } .b3 { height: 60px; } .b4 { height: 44px; } .b5 { height: 163px; } .b6 { height: 142px; }
.behind .b2 { border-color: #00f; }
.behind .b3 { border-color: #f00; }

/* grant access dialog */
.pick { display: flex; align-items: flex-start; gap: 2px; margin: 14px 0 11px; padding-left: 1px; }
.pick label { flex: none; width: 156px; padding-top: 2px; }
.list { display: flex; width: 151px; border: solid #888; border-width: 1px 0 0 1px; background: #fff; }
.list select { flex: 1; min-width: 0; height: 65px; padding: 0; border: 0; appearance: none; background: #fff; overflow: hidden; scrollbar-width: none; color: #000; }
.list option { min-height: 13px; padding: 0 2px; line-height: 13px; }
.lbar { width: 13px; display: flex; flex-direction: column; align-items: center; border-radius: 6px; background: #d4d4d4; color: #555; }
.lbar span { width: 13px; height: 13px; border: 1px solid #bbb; border-bottom: 0; border-radius: 6px 6px 0 0; background: #f3f3f3; text-align: center; line-height: 12px; }
.lbar span:first-child { color: #aaa; }
.lbar b { width: 13px; height: 30px; display: flex; align-items: center; border: 1px solid #888; border-radius: 6px; background: #f5f5f5; }
.lbar .dn { margin-top: auto; border: 1px solid #bbb; border-top: 0; border-radius: 0 0 6px 6px; }
.big { width: 88px; height: 18px; margin-left: -1px; }
.foot { height: 58px; display: flex; align-items: flex-start; padding: 2px 2px 0; background: #fff; font: bold 12px/13px "DejaVu Sans Condensed", "DejaVu Sans", sans-serif; }
.foot-links { flex: 0 1 349px; padding-right: 15px; }
.fb { display: flex; align-items: center; gap: 4px; font: 7px/13px "Liberation Sans", sans-serif; color: #222; white-space: nowrap; }
.frame .fb a { color: #3b5998; text-decoration: none; }
.like { width: 30px; height: 14px; display: flex; align-items: center; justify-content: center; gap: 3px; border-radius: 1px; background: #4862a3; color: #fff; font-weight: bold; }
.tree { margin-left: auto; }
```
